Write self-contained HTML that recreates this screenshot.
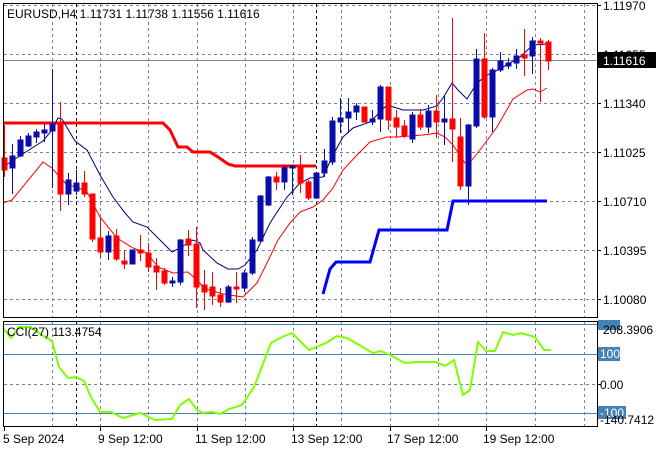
<!DOCTYPE html>
<html><head><meta charset="utf-8"><style>
html,body{margin:0;padding:0;background:#fff;}
svg{display:block;font-family:"Liberation Sans",sans-serif;font-size:12px;}
</style></head><body>
<svg width="660" height="450" xmlns="http://www.w3.org/2000/svg">
<rect width="660" height="450" fill="#fff"/>
<g stroke="#7a8494" stroke-dasharray="3,3" stroke-width="1">
<line x1="4" x2="597" y1="5.5" y2="5.5"/><line x1="4" x2="597" y1="54.5" y2="54.5"/><line x1="4" x2="597" y1="103.5" y2="103.5"/><line x1="4" x2="597" y1="152.5" y2="152.5"/><line x1="4" x2="597" y1="201.5" y2="201.5"/><line x1="4" x2="597" y1="250.5" y2="250.5"/><line x1="4" x2="597" y1="299.5" y2="299.5"/>
<line x1="4" x2="597" y1="384.5" y2="384.5"/>
<g id="vg">
<line x1="52.5" x2="52.5" y1="4" y2="317"/><line x1="100.5" x2="100.5" y1="4" y2="317"/><line x1="148.5" x2="148.5" y1="4" y2="317"/><line x1="197.5" x2="197.5" y1="4" y2="317"/><line x1="245.5" x2="245.5" y1="4" y2="317"/><line x1="293.5" x2="293.5" y1="4" y2="317"/><line x1="341.5" x2="341.5" y1="4" y2="317"/><line x1="390.5" x2="390.5" y1="4" y2="317"/><line x1="438.5" x2="438.5" y1="4" y2="317"/><line x1="486.5" x2="486.5" y1="4" y2="317"/><line x1="535.5" x2="535.5" y1="4" y2="317"/><line x1="584.5" x2="584.5" y1="4" y2="317"/>
</g>
<line x1="52.5" x2="52.5" y1="322" y2="426"/><line x1="100.5" x2="100.5" y1="322" y2="426"/><line x1="148.5" x2="148.5" y1="322" y2="426"/><line x1="197.5" x2="197.5" y1="322" y2="426"/><line x1="245.5" x2="245.5" y1="322" y2="426"/><line x1="293.5" x2="293.5" y1="322" y2="426"/><line x1="341.5" x2="341.5" y1="322" y2="426"/><line x1="390.5" x2="390.5" y1="322" y2="426"/><line x1="438.5" x2="438.5" y1="322" y2="426"/><line x1="486.5" x2="486.5" y1="322" y2="426"/><line x1="535.5" x2="535.5" y1="322" y2="426"/><line x1="584.5" x2="584.5" y1="322" y2="426"/>
</g>
<g stroke="#000" stroke-dasharray="3,3">
<line x1="76.5" x2="76.5" y1="4" y2="317"/><line x1="316.5" x2="316.5" y1="4" y2="317"/>
<line x1="76.5" x2="76.5" y1="322" y2="426"/><line x1="316.5" x2="316.5" y1="322" y2="426"/>
</g>
<line x1="4" x2="597" y1="60.5" y2="60.5" stroke="#778899"/>
<!-- indicators -->
<polyline fill="none" stroke="#ff0000" stroke-width="3" points="4,123 163,123 170,130 178,147 187,147 193,152 210,152 218,157 228,164 235,166 316,166"/>
<polyline fill="none" stroke="#0000ff" stroke-width="3" points="323,294 330,269 336,262 370,262 379,230 447,230 453,201 547,201"/>
<polyline fill="none" stroke="#00007a" stroke-width="1" points="3,167 18,157 43,141 52,130 58,118 62,119 75,141 87,150 100,175 113,197 125,213 133,222 147,227 157,237 172,252 180,248 193,240 200,243 203,250 217,263 228,269 238,269 245,265 257,250 270,223 287,197 300,183 310,178 323,177 333,155 343,137 353,128 370,122 380,112 387,105 403,110 423,110 437,106 443,98 452,83 458,90 467,99 477,83 487,75 498,70 520,57 533,45 547,44"/>
<polyline fill="none" stroke="#ff0000" stroke-width="1" points="3,203 12,200 43,162 52,168 58,175 67,185 77,187 87,192 100,217 117,238 133,248 147,253 158,267 173,273 188,272 200,283 203,288 223,294 243,297 257,283 267,263 278,240 290,223 300,212 313,207 323,200 333,188 343,170 357,155 370,142 387,137 397,137 423,135 437,133 445,137 453,145 465,163 472,160 483,146 497,127 513,99 527,90 533,89 540,92 547,88"/>
<!-- candles -->
<g id="c"></g>
<g stroke-width="1">
<g stroke="#ff0000" fill="#ff0000">
<line x1="4.5" x2="4.5" y1="125" y2="177"/><rect x="2" y="158" width="5" height="12"/>
<line x1="60.5" x2="60.5" y1="102" y2="211"/><rect x="58" y="123" width="5" height="71"/>
<line x1="84.5" x2="84.5" y1="171" y2="197"/><rect x="82" y="183" width="5" height="11"/>
<line x1="92.5" x2="92.5" y1="194" y2="242"/><rect x="90" y="194" width="5" height="45"/>
<line x1="100.5" x2="100.5" y1="218" y2="258"/><rect x="98" y="238" width="5" height="14"/>
<line x1="116.5" x2="116.5" y1="229" y2="261"/><rect x="114" y="236" width="5" height="23"/>
<line x1="124.5" x2="124.5" y1="250" y2="269"/><rect x="122" y="261" width="5" height="3"/>
<line x1="140.5" x2="140.5" y1="235" y2="261"/><rect x="138" y="250" width="5" height="3"/>
<line x1="148.5" x2="148.5" y1="243" y2="272"/><rect x="146" y="253" width="5" height="14"/>
<line x1="156.5" x2="156.5" y1="258" y2="290"/><rect x="154" y="266" width="5" height="6"/>
<line x1="164.5" x2="164.5" y1="268" y2="285"/><rect x="162" y="271" width="5" height="12"/>
<line x1="188.5" x2="188.5" y1="230" y2="256"/><rect x="186" y="239" width="5" height="6"/>
<line x1="196.5" x2="196.5" y1="227" y2="308"/><rect x="194" y="244" width="5" height="43"/>
<line x1="204.5" x2="204.5" y1="270" y2="310"/><rect x="202" y="285" width="5" height="7"/>
<line x1="212.5" x2="212.5" y1="272" y2="305"/><rect x="210" y="287" width="5" height="9"/>
<line x1="220.5" x2="220.5" y1="288" y2="307"/><rect x="218" y="295" width="5" height="7"/>
<line x1="236.5" x2="236.5" y1="272" y2="303"/><rect x="234" y="287" width="5" height="2"/>
<line x1="276.5" x2="276.5" y1="172" y2="190"/><rect x="274" y="177" width="5" height="5"/>
<line x1="300.5" x2="300.5" y1="155" y2="193"/><rect x="298" y="166" width="5" height="17"/>
<line x1="308.5" x2="308.5" y1="180" y2="200"/><rect x="306" y="182" width="5" height="16"/>
<line x1="364.5" x2="364.5" y1="107" y2="122"/><rect x="362" y="107" width="5" height="15"/>
<line x1="388.5" x2="388.5" y1="87" y2="130"/><rect x="386" y="87" width="5" height="33"/>
<line x1="396.5" x2="396.5" y1="110" y2="138"/><rect x="394" y="118" width="5" height="9"/>
<line x1="404.5" x2="404.5" y1="120" y2="138"/><rect x="402" y="126" width="5" height="10"/>
<line x1="420.5" x2="420.5" y1="109" y2="130"/><rect x="418" y="115" width="5" height="12"/>
<line x1="436.5" x2="436.5" y1="95" y2="138"/><rect x="434" y="111" width="5" height="11"/>
<line x1="452.5" x2="452.5" y1="18" y2="162"/><rect x="450" y="119" width="5" height="10"/>
<line x1="460.5" x2="460.5" y1="118" y2="190"/><rect x="458" y="137" width="5" height="49"/>
<line x1="484.5" x2="484.5" y1="33" y2="119"/><rect x="482" y="59" width="5" height="58"/>
<line x1="524.5" x2="524.5" y1="29" y2="76"/><rect x="522" y="55" width="5" height="3"/>
<line x1="540.5" x2="540.5" y1="38" y2="102"/><rect x="538" y="41" width="5" height="2"/>
<line x1="548.5" x2="548.5" y1="40" y2="70"/><rect x="546" y="42" width="5" height="19"/>
</g>
<g stroke="#0a0aa8" fill="#0a0aa8">
<line x1="12.5" x2="12.5" y1="144" y2="194"/><rect x="10" y="156" width="5" height="12"/>
<line x1="20.5" x2="20.5" y1="136" y2="157"/><rect x="18" y="140" width="5" height="16"/>
<line x1="28.5" x2="28.5" y1="133" y2="147"/><rect x="26" y="136" width="5" height="10"/>
<line x1="36.5" x2="36.5" y1="129" y2="143"/><rect x="34" y="132" width="5" height="5"/>
<line x1="44.5" x2="44.5" y1="123" y2="142"/><rect x="42" y="130" width="5" height="3"/>
<line x1="52.5" x2="52.5" y1="69" y2="188"/><rect x="50" y="124" width="5" height="7"/>
<line x1="68.5" x2="68.5" y1="173" y2="205"/><rect x="66" y="180" width="5" height="14"/>
<line x1="76.5" x2="76.5" y1="170" y2="195"/><rect x="74" y="183" width="5" height="8"/>
<line x1="108.5" x2="108.5" y1="231" y2="260"/><rect x="106" y="236" width="5" height="16"/>
<line x1="132.5" x2="132.5" y1="250" y2="264"/><rect x="130" y="250" width="5" height="14"/>
<line x1="172.5" x2="172.5" y1="277" y2="287"/><rect x="170" y="281" width="5" height="2"/>
<line x1="180.5" x2="180.5" y1="239" y2="285"/><rect x="178" y="240" width="5" height="42"/>
<line x1="228.5" x2="228.5" y1="285" y2="303"/><rect x="226" y="287" width="5" height="15"/>
<line x1="244.5" x2="244.5" y1="270" y2="292"/><rect x="242" y="273" width="5" height="15"/>
<line x1="252.5" x2="252.5" y1="237" y2="275"/><rect x="250" y="240" width="5" height="33"/>
<line x1="260.5" x2="260.5" y1="195" y2="243"/><rect x="258" y="196" width="5" height="45"/>
<line x1="268.5" x2="268.5" y1="176" y2="206"/><rect x="266" y="177" width="5" height="28"/>
<line x1="284.5" x2="284.5" y1="165" y2="190"/><rect x="282" y="168" width="5" height="14"/>
<line x1="292.5" x2="292.5" y1="165" y2="195"/><rect x="290" y="166" width="5" height="2"/>
<line x1="316.5" x2="316.5" y1="172" y2="199"/><rect x="314" y="173" width="5" height="25"/>
<line x1="324.5" x2="324.5" y1="149" y2="177"/><rect x="322" y="161" width="5" height="12"/>
<line x1="332.5" x2="332.5" y1="117" y2="165"/><rect x="330" y="121" width="5" height="41"/>
<line x1="340.5" x2="340.5" y1="98" y2="133"/><rect x="338" y="118" width="5" height="4"/>
<line x1="348.5" x2="348.5" y1="98" y2="133"/><rect x="346" y="112" width="5" height="6"/>
<line x1="356.5" x2="356.5" y1="103" y2="120"/><rect x="354" y="106" width="5" height="6"/>
<line x1="372.5" x2="372.5" y1="110" y2="125"/><rect x="370" y="119" width="5" height="3"/>
<line x1="380.5" x2="380.5" y1="85" y2="132"/><rect x="378" y="87" width="5" height="32"/>
<line x1="412.5" x2="412.5" y1="112" y2="143"/><rect x="410" y="115" width="5" height="24"/>
<line x1="428.5" x2="428.5" y1="105" y2="133"/><rect x="426" y="111" width="5" height="16"/>
<line x1="444.5" x2="444.5" y1="95" y2="145"/><rect x="442" y="119" width="5" height="3"/>
<line x1="468.5" x2="468.5" y1="124" y2="205"/><rect x="466" y="125" width="5" height="61"/>
<line x1="476.5" x2="476.5" y1="49" y2="128"/><rect x="474" y="59" width="5" height="67"/>
<line x1="492.5" x2="492.5" y1="68" y2="132"/><rect x="490" y="70" width="5" height="47"/>
<line x1="500.5" x2="500.5" y1="52" y2="72"/><rect x="498" y="61" width="5" height="9"/>
<line x1="508.5" x2="508.5" y1="58" y2="69"/><rect x="506" y="63" width="5" height="3"/>
<line x1="516.5" x2="516.5" y1="49" y2="69"/><rect x="514" y="56" width="5" height="7"/>
<line x1="532.5" x2="532.5" y1="37" y2="74"/><rect x="530" y="41" width="5" height="15"/>
</g>
</g>
<!-- CCI levels -->
<g stroke="#4682b4">
<line x1="4" x2="597" y1="324.5" y2="324.5"/><line x1="4" x2="597" y1="354.5" y2="354.5"/><line x1="4" x2="597" y1="413.5" y2="413.5"/>
</g>
<polyline fill="none" stroke="#7fff00" stroke-width="2" points="3,328 11,338 19,327 30,327 42,335 52,341 59,367 68,378 76,377 84,381 91,397 100,412 111,412 123,418 140,413 155,420 172,419 180,405 189,399 197,410 203,413 212,412 220,414 229,409 242,405 254,387 271,343 282,337 292,333 309,350 326,343 337,336 347,338 373,353 381,351 390,355 405,363 419,362 436,362 445,366 454,360 463,395 470,390 478,342 486,351 495,351 503,332 513,335 521,333 535,337 544,350 551,350"/>
<!-- frames -->
<rect x="3.5" y="3.5" width="594" height="314" fill="none" stroke="#000"/>
<rect x="3.5" y="321.5" width="594" height="105" fill="none" stroke="#000"/>
<!-- text -->
<text x="7" y="18" fill="#000">EURUSD,H4  1.11731 1.11738 1.11556 1.11616</text>
<text x="7" y="336" fill="#000">CCI(27) 113.4754</text>
<g fill="#000">
<text x="603" y="10">1.11970</text>
<text x="603" y="59">1.11655</text>
<text x="603" y="108">1.11340</text>
<text x="603" y="157">1.11025</text>
<text x="603" y="206">1.10710</text>
<text x="603" y="255">1.10395</text>
<text x="603" y="304">1.10080</text>
</g>
<rect x="598" y="52" width="58" height="16" fill="#000"/>
<text x="603" y="65" fill="#fff">1.11616</text>
<rect x="598" y="320" width="22" height="10" fill="#4682b4"/>
<text x="603" y="334" fill="#000">208.3906</text>
<rect x="598" y="347" width="22" height="14" fill="#4682b4"/>
<text x="600" y="358" fill="#fff">100</text>
<text x="600" y="389" fill="#000">0.00</text>
<rect x="598" y="406" width="28" height="13" fill="#4682b4"/>
<text x="600" y="417" fill="#fff">-100</text>
<text x="600" y="424" fill="#000">-140.7412</text>
<g stroke="#000">
<line x1="597" x2="601" y1="5.5" y2="5.5"/><line x1="597" x2="601" y1="103.5" y2="103.5"/><line x1="597" x2="601" y1="152.5" y2="152.5"/><line x1="597" x2="601" y1="201.5" y2="201.5"/><line x1="597" x2="601" y1="250.5" y2="250.5"/><line x1="597" x2="601" y1="299.5" y2="299.5"/><line x1="597" x2="601" y1="384.5" y2="384.5"/>
<line x1="4.5" x2="4.5" y1="426" y2="431"/><line x1="100.5" x2="100.5" y1="426" y2="431"/><line x1="197.5" x2="197.5" y1="426" y2="431"/><line x1="293.5" x2="293.5" y1="426" y2="431"/><line x1="390.5" x2="390.5" y1="426" y2="431"/><line x1="486.5" x2="486.5" y1="426" y2="431"/>
</g>
<g fill="#000">
<text x="3" y="443">5 Sep 2024</text>
<text x="98" y="443">9 Sep 12:00</text>
<text x="195" y="443">11 Sep 12:00</text>
<text x="291" y="443">13 Sep 12:00</text>
<text x="387" y="443">17 Sep 12:00</text>
<text x="483" y="443">19 Sep 12:00</text>
</g>
</svg>
</body></html>
